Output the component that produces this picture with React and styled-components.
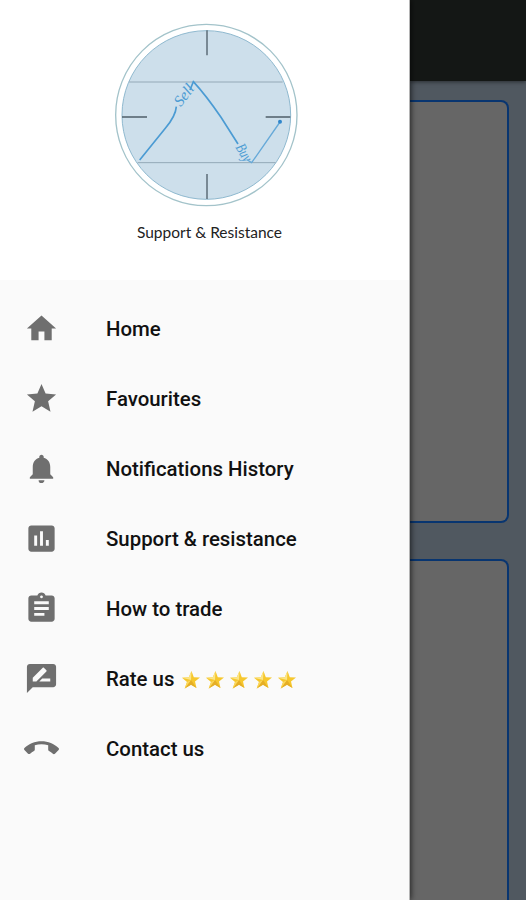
import React from 'react';
import styled, {createGlobalStyle} from 'styled-components';
import {
  MdHome,
  MdStar,
  MdNotifications,
  MdAssessment,
  MdAssignment,
  MdRateReview,
  MdCallEnd,
} from 'react-icons/md';

const items = [
  {label: 'Home', icon: MdHome},
  {label: 'Favourites', icon: MdStar},
  {label: 'Notifications History', icon: MdNotifications},
  {label: 'Support & resistance', icon: MdAssessment},
  {label: 'How to trade', icon: MdAssignment},
  {label: 'Rate us', icon: MdRateReview, stars: 5},
  {label: 'Contact us', icon: MdCallEnd},
];

function Logo() {
  return (
    <svg width="200" height="200" viewBox="0 0 600 600" fill="none">
      <circle cx="301" cy="297" r="272" fill="#fff" stroke="#a3c3ca" strokeWidth="4" />
      <circle cx="301" cy="297" r="253" fill="#cddfeb" stroke="#8fb9cf" strokeWidth="3" />
      {/* support and resistance levels */}
      <path d="M69 198H530M95 440H509" stroke="#94a9b7" strokeWidth="3" />
      <path d="M303 43V118M303 474V549M48 303H123M479 303H553" stroke="#4f5f6a" strokeWidth="4" />
      {/* price line */}
      <path d="M101 432L178 337Q209 300 211 272" stroke="#4b9bd3" strokeWidth="5" />
      <path d="M252 222L262 197Q300 238 345 304L396 384" stroke="#4b9bd3" strokeWidth="5" />
      <path d="M424 432L437 440L522 318" stroke="#66a9d8" strokeWidth="4" />
      <circle cx="522" cy="317" r="6" fill="#2f86cb" />
      <LogoText transform="translate(224 274) rotate(-52)" textLength="70" lengthAdjust="spacingAndGlyphs">Sell</LogoText>
      <LogoText transform="translate(388 394) rotate(60)" textLength="54" lengthAdjust="spacingAndGlyphs">Buy</LogoText>
    </svg>
  );
}

function GoldStar() {
  return (
    <svg width="20" height="20" viewBox="0 0 20 20">
      <path d="M10.5 1L12.8 7.2L19 7.6L14 11.6L15.5 18L10 14.8L3.7 18.5L6 12L1 7.8L7.8 7.2Z" fill="#f6c72d" />
      <path d="M10.5 1L10 10L1 7.8L7.8 7.2Z" fill="#fbe588" />
      <path d="M10 10L15.5 18L10 14.8L3.7 18.5Z" fill="#e5ae26" />
      <path d="M10 10L6 12L3.7 18.5Z" fill="#fad75d" />
    </svg>
  );
}

function App() {
  return (
    <>
      <GlobalStyle />
      <Screen>
        <Drawer>
          <Header>
            <Logo />
            <Title>Support &amp; Resistance</Title>
          </Header>
          <Menu>
            {items.map(({label, icon: Icon, stars}) => (
              <MenuItem key={label}>
                <Icon size={35} />
                <Label>{label}</Label>
                {stars && (
                  <Stars>
                    {Array.from({length: stars}, (_, i) => <GoldStar key={i} />)}
                  </Stars>
                )}
              </MenuItem>
            ))}
          </Menu>
        </Drawer>
        {/* the page behind the open drawer, already dimmed */}
        <Page>
          <AppBar />
          <Cards>
            <Card />
            <Card />
          </Cards>
        </Page>
      </Screen>
    </>
  );
}

const GlobalStyle = createGlobalStyle`
  *{
    box-sizing: border-box;
  }
  body{
    margin: 0;
    font-family: Roboto, sans-serif;
  }
`;

const Screen = styled.div`
  display: flex;
  width: 526px;
  height: 900px;
  overflow: hidden;
`;

const Drawer = styled.aside`
  position: relative;
  z-index: 1;
  width: 410px;
  flex-shrink: 0;
  background: #fafafa;
  border-right: 1px solid #b5b5b5;
  box-shadow: 1px 0 6px rgba(0, 0, 0, 0.65);
`;

const Header = styled.header`
  display: flex;
  flex-direction: column;
  align-items: center;
  height: 280px;
  padding: 16px 0 0 3px;
  background: #fff;
  svg{
    flex-shrink: 0;
  }
`;

const Title = styled.h1`
  margin: 6px 0 0 7px;
  font-family: Lato, sans-serif;
  font-size: 15.5px;
  line-height: 20px;
  font-weight: 400;
  color: #222;
  white-space: nowrap;
`;

const LogoText = styled.text`
  font-family: "Liberation Serif", serif;
  font-style: italic;
  font-size: 46px;
  fill: #4b9bd3;
`;

const Menu = styled.nav`
  padding-top: 13px;
`;

const MenuItem = styled.a`
  display: flex;
  align-items: center;
  height: 70.15px;
  padding-left: 24px;
  font-size: 20.4px;
  font-weight: 500;
  color: #111;
  white-space: nowrap;
  > svg{
    color: #6f6f6f;
    margin-right: 47px;
  }
`;

const Label = styled.span`
  padding-top: 1px;
`;

const Stars = styled.span`
  display: flex;
  gap: 4px;
  padding-top: 2px;
  margin-left: 7px;
`;

const Page = styled.main`
  flex: 1;
  background: #505860;
`;

const AppBar = styled.div`
  height: 81px;
  background: #141715;
  box-shadow: 0 1px 4px rgba(0, 0, 0, 0.5);
`;

const Cards = styled.div`
  display: flex;
  flex-direction: column;
  gap: 36px;
  padding: 19px 17.5px 0 0;
`;

const Card = styled.div`
  height: 423px;
  background: #666;
  border: 2px solid #083570;
  border-left: 0;
  border-radius: 0 8px 8px 0;
`;

export default App
